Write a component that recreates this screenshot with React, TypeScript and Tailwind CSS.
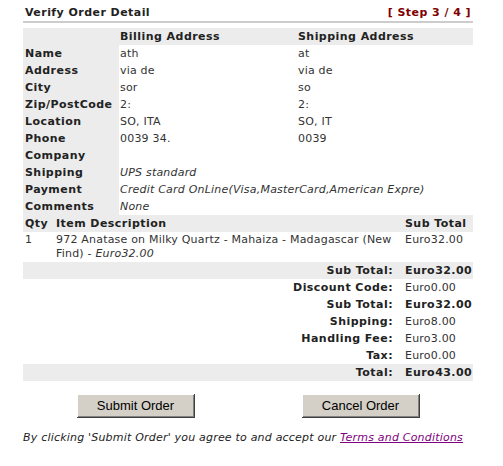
import React from 'react';

const addressRows: [string, string, string][] = [
  ['Name', 'ath', 'at'],
  ['Address', 'via de', 'via de'],
  ['City', 'sor', 'so'],
  ['Zip/PostCode', '2:', '2:'],
  ['Location', 'SO, ITA', 'SO, IT'],
  ['Phone', '0039 34.', '0039'],
];

const totals: { label: string; value: string; bold?: boolean; shade?: boolean }[] = [
  { label: 'Sub Total:', value: 'Euro32.00', bold: true, shade: true },
  { label: 'Discount Code:', value: 'Euro0.00' },
  { label: 'Sub Total:', value: 'Euro32.00', bold: true },
  { label: 'Shipping:', value: 'Euro8.00' },
  { label: 'Handling Fee:', value: 'Euro3.00' },
  { label: 'Tax:', value: 'Euro0.00' },
  { label: 'Total:', value: 'Euro43.00', bold: true, shade: true },
];

const Row: React.FC<{ label: string; children?: React.ReactNode }> = ({ label, children }) => (
  <div className="grid grid-cols-[96px_1fr] leading-[15px]">
    <div className="bg-[#ececec] py-px pl-[2px] font-bold tracking-[0.45px] text-[#222]">{label}</div>
    <div className="py-px pl-px italic">{children}</div>
  </div>
);

const btn =
  "w-[118px] h-[24px] bg-[#d4d0c8] text-[13px] text-black tracking-normal font-['Liberation_Sans',Arial,sans-serif] shadow-[inset_-1px_-1px_#404040,inset_1px_1px_#ffffff,inset_-2px_-2px_#808080]";

const App: React.FC = () => {
  return (
    <div className="w-[503px] h-[466px] bg-white text-[11px] tracking-[0.2px] text-[#333] font-['DejaVu_Sans',Verdana,sans-serif]">
      <div className="ml-[23px] w-[450px] pt-[5px]">
        {/* heading */}
        <div className="flex justify-between leading-[15px] font-bold tracking-[0.45px] px-[2px]">
          <span className="text-[#222]">Verify Order Detail</span>
          <span className="text-[#800000]">[ Step 3 / 4 ]</span>
        </div>
        <div className="mt-[1px] h-[2px] bg-[#cccccc]" />

        {/* addresses */}
        <div className="mt-[5px] leading-[15px]">
          <div className="grid grid-cols-[96px_178px_1fr] bg-[#ececec] font-bold tracking-[0.45px] text-[#222]">
            <div className="py-px" />
            <div className="py-px pl-px">Billing Address</div>
            <div className="py-px pl-px">Shipping Address</div>
          </div>
          {addressRows.map(([label, bill, ship]) => (
            <div key={label} className="grid grid-cols-[96px_178px_1fr]">
              <div className="bg-[#ececec] py-px pl-[2px] font-bold tracking-[0.45px] text-[#222]">{label}</div>
              <div className="py-px pl-px">{bill}</div>
              <div className="py-px pl-px">{ship}</div>
            </div>
          ))}
          <Row label="Company" />
          <Row label="Shipping">UPS standard</Row>
          <Row label="Payment">Credit Card OnLine(Visa,MasterCard,American Expre)</Row>
          <Row label="Comments">None</Row>
        </div>

        {/* items */}
        <div className="grid grid-cols-[33px_1fr_70px] bg-[#ececec] font-bold tracking-[0.45px] text-[#222] leading-[15px]">
          <div className="py-px pl-[2px]">Qty</div>
          <div className="py-px">Item Description</div>
          <div className="py-px pl-[2px]">Sub Total</div>
        </div>
        <div className="grid grid-cols-[33px_1fr_70px] leading-[14px]">
          <div className="py-px pl-[2px]">1</div>
          <div className="py-px">
            972 Anatase on Milky Quartz - Mahaiza - Madagascar (New
            <br />
            Find) - <i>Euro32.00</i>
          </div>
          <div className="py-px pl-[2px]">Euro32.00</div>
        </div>

        {/* totals */}
        {totals.map((t, i) => (
          <div
            key={i}
            className={`grid grid-cols-[1fr_70px] leading-[15px] ${t.shade ? 'bg-[#ececec]' : ''}`}
          >
            <div className="py-px pr-[10px] text-right font-bold tracking-[0.45px] text-[#222]">{t.label}</div>
            <div className={`py-px pl-[2px] ${t.bold ? 'font-bold tracking-[0.45px] text-[#222]' : ''}`}>{t.value}</div>
          </div>
        ))}

        {/* buttons */}
        <div className="grid grid-cols-2 mt-[13px]">
          <div className="flex justify-center">
            <button className={btn}>Submit Order</button>
          </div>
          <div className="flex justify-center">
            <button className={btn}>Cancel Order</button>
          </div>
        </div>

        <p className="mt-[12px] italic leading-[15px] text-[#222]">
          By clicking 'Submit Order' you agree to and accept our{' '}
          <a href="#" className="text-[#800080] underline">
            Terms and Conditions
          </a>
        </p>
      </div>
    </div>
  );
};

export default App;
